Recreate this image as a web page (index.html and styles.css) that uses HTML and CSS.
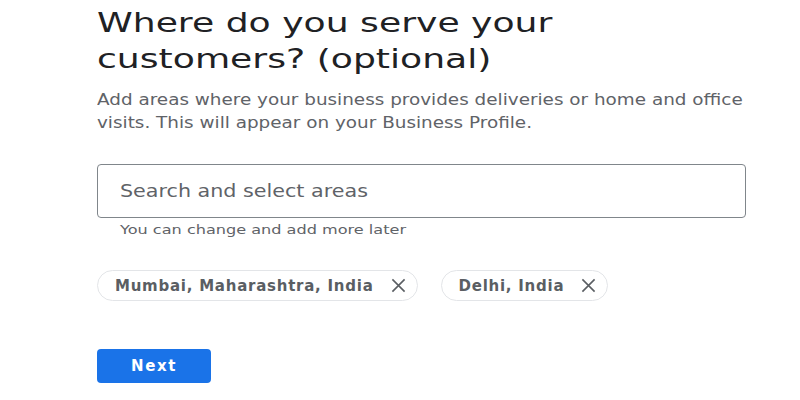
FILE: index.html
```html
<!DOCTYPE html>
<html>
<head>
<meta charset="utf-8">
<link rel="stylesheet" href="styles.css">
</head>
<body>
<main class="page">
  <h1 class="title">Where do you serve your<br>customers? (optional)</h1>
  <p class="desc">Add areas where your business provides deliveries or home and office<br>visits. This will appear on your Business Profile.</p>
  <div class="field">
    <div class="input"><span class="placeholder">Search and select areas</span></div>
    <div class="helper">You can change and add more later</div>
  </div>
  <div class="chips">
    <span class="chip"><span class="chip-label">Mumbai, Maharashtra, India</span>
      <svg class="x" viewBox="0 0 16 16" width="15" height="15"><path d="M1.5 1.5 14.5 14.5M14.5 1.5 1.5 14.5"/></svg>
    </span>
    <span class="chip"><span class="chip-label">Delhi, India</span>
      <svg class="x" viewBox="0 0 16 16" width="15" height="15"><path d="M1.5 1.5 14.5 14.5M14.5 1.5 1.5 14.5"/></svg>
    </span>
  </div>
  <button class="next">Next</button>
</main>
</body>
</html>
```
FILE: styles.css
```css
html, body { margin: 0; padding: 0; background: #fff; }
body { font-family: "DejaVu Sans", "Open Sans", sans-serif; color: #202124; }
.page { padding: 5px 0 0 97px; width: 660px; }
.title { margin: 0; width: max-content; font-size: 26px; font-weight: 400; line-height: 36px; color: #202124; white-space: nowrap; transform: scaleX(1.39); transform-origin: 0 0; }
.desc { margin: 12px 0 0; width: max-content; font-size: 15px; line-height: 23px; color: #5f6368; white-space: nowrap; transform: scaleX(1.225); transform-origin: 0 0; }
.field { margin-top: 29px; }
.input { height: 52px; border: 1px solid #80868b; border-radius: 4px; padding: 0 0 0 22px; display: flex; align-items: center; width: 625px; }
.placeholder { font-size: 17px; color: #5f6368; white-space: nowrap; transform: scaleX(1.216); transform-origin: 0 50%; }
.helper { margin: 4px 0 0 23px; width: max-content; font-size: 13px; line-height: 16px; color: #5f6368; white-space: nowrap; transform: scaleX(1.238); transform-origin: 0 0; }
.chips { display: flex; gap: 23px; margin-top: 32px; }
.chip { display: inline-flex; align-items: center; height: 29px; border: 1px solid #e3e5e8; border-radius: 16px; padding: 0 11px 0 17px; gap: 17px; }
.chip-label { font-size: 15px; font-weight: 700; color: #5a5e63; letter-spacing: 0.75px; }
.x { fill: none; stroke: #5a5e63; stroke-width: 1.7; }
.next { display: block; margin-top: 48px; width: 114px; height: 34px; border: none; border-radius: 4px; background: #1a73e8; color: #fff; font-family: "DejaVu Sans", sans-serif; font-size: 15px; font-weight: 700; letter-spacing: 1.6px; padding: 0; }
```
